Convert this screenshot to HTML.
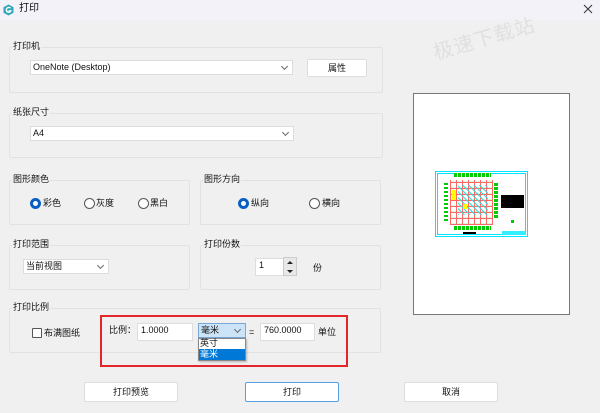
<!DOCTYPE html>
<html><head><meta charset="utf-8"><style>
*{box-sizing:border-box;margin:0;padding:0}
body{width:600px;height:413px;background:#f0f0f0;position:relative;overflow:hidden;font-family:"Liberation Sans","Noto Sans CJK SC",sans-serif;font-size:9px;color:#111}
.a{position:absolute}
.title{left:0;top:0;width:600px;height:20px;background:#f3f2f8}
.grp{position:absolute;border:1px solid #e2e2e2;border-radius:2px}
.lbl{position:absolute;background:#f0f0f0;padding:0 1px;font-size:9px;line-height:11px}
.sel{position:absolute;background:#fff;border:1px solid #dcdcdc;height:15px;line-height:13px;padding-left:2px;font-size:9px}
.sel .ch{position:absolute;right:5px;top:3px;width:5px;height:5px;border-right:1px solid #666;border-bottom:1px solid #666;transform:rotate(45deg)}
.btn{position:absolute;background:#fff;border:1px solid #ddd;border-radius:2px;height:20px;line-height:18px;text-align:center;font-size:9px}
.rad{position:absolute;width:11px;height:11px;border:1px solid #555;border-radius:50%;background:#fff}
.rad.on{border:3px solid #0a5fc4}
.t{position:absolute;font-size:9px;line-height:11px}
.inp{position:absolute;background:#fff;border:1px solid #ddd;font-size:9px;line-height:13px;padding-left:3px}
</style></head><body>
<div class="a title"></div>
<svg class="a" style="left:3px;top:4px" width="11" height="12" viewBox="0 0 11 12"><path d="M5.5 0.5L10.5 3.2V8.8L5.5 11.5L0.5 8.8V3.2Z" fill="#2fa7b9"/><path d="M7.5 4.2A2.4 2.4 0 1 0 7.8 7H5.6" stroke="#fff" stroke-width="1.4" fill="none"/></svg>
<div class="t" style="left:19px;top:3px;font-size:10px;line-height:12px">打印</div>
<svg class="a" style="left:583px;top:4px" width="10" height="10"><path d="M1 1L9 9M9 1L1 9" stroke="#333" stroke-width="1"/></svg>
<div class="a" style="left:434px;top:43px;font-size:20px;color:#e0e0e0;transform:rotate(-16deg);transform-origin:left center;letter-spacing:1px;line-height:22px">极速下载站</div>

<div class="grp" style="left:9px;top:47px;width:374px;height:46px"></div>
<div class="lbl" style="left:12px;top:41px">打印机</div>
<div class="sel" style="left:30px;top:60px;width:263px">OneNote (Desktop)<span class="ch"></span></div>
<div class="btn" style="left:307px;top:59px;width:60px;height:18px;line-height:16px">属性</div>

<div class="grp" style="left:9px;top:113px;width:374px;height:45px"></div>
<div class="lbl" style="left:12px;top:107px">纸张尺寸</div>
<div class="sel" style="left:30px;top:126px;width:264px">A4<span class="ch"></span></div>

<div class="grp" style="left:9px;top:180px;width:181px;height:45px"></div>
<div class="lbl" style="left:12px;top:174px">图形颜色</div>
<div class="rad on" style="left:30px;top:198px"></div><div class="t" style="left:43px;top:198px">彩色</div>
<div class="rad" style="left:84px;top:198px"></div><div class="t" style="left:96px;top:198px">灰度</div>
<div class="rad" style="left:138px;top:198px"></div><div class="t" style="left:150px;top:198px">黑白</div>

<div class="grp" style="left:200px;top:180px;width:181px;height:45px"></div>
<div class="lbl" style="left:203px;top:174px">图形方向</div>
<div class="rad on" style="left:238px;top:198px"></div><div class="t" style="left:251px;top:198px">纵向</div>
<div class="rad" style="left:309px;top:198px"></div><div class="t" style="left:322px;top:198px">横向</div>

<div class="grp" style="left:9px;top:245px;width:181px;height:45px"></div>
<div class="lbl" style="left:12px;top:239px">打印范围</div>
<div class="sel" style="left:23px;top:259px;width:86px">当前视图<span class="ch"></span></div>

<div class="grp" style="left:200px;top:245px;width:181px;height:45px"></div>
<div class="lbl" style="left:203px;top:239px">打印份数</div>
<div class="inp" style="left:255px;top:258px;width:29px;height:18px">1</div>
<div class="a" style="left:283px;top:257px;width:14px;height:19px;background:#e8e8e8;border:1px solid #ccc"></div>
<svg class="a" style="left:286px;top:259px" width="8" height="16"><path d="M1 5L4 2L7 5Z M1 11L4 14L7 11Z" fill="#222"/></svg>
<div class="t" style="left:313px;top:263px">份</div>

<div class="grp" style="left:9px;top:308px;width:372px;height:45px"></div>
<div class="lbl" style="left:12px;top:302px">打印比例</div>
<div class="a" style="left:32px;top:328px;width:10px;height:10px;border:1px solid #555;background:#fff;border-radius:1px"></div>
<div class="t" style="left:44px;top:328px">布满图纸</div>

<div class="a" style="left:100px;top:315px;width:248px;height:52px;border:2px solid #e3262b"></div>
<div class="t" style="left:109px;top:325px">比例：</div>
<div class="inp" style="left:137px;top:323px;width:56px;height:18px">1.0000</div>
<div class="sel" style="left:198px;top:323px;width:48px;height:15px;background:#cce4f7;border-color:#7aa7d6">毫米<span class="ch"></span></div>
<div class="a" style="left:198px;top:338px;width:48px;height:23px;background:#fff;border:1px solid #888;box-shadow:1px 1px 2px rgba(0,0,0,.25)"></div>
<div class="t" style="left:200px;top:338px">英寸</div>
<div class="a" style="left:199px;top:349px;width:46px;height:11px;background:#0078d7"></div>
<div class="t" style="left:200px;top:349px;color:#fff">毫米</div>
<div class="t" style="left:249px;top:327px">=</div>
<div class="inp" style="left:260px;top:323px;width:55px;height:18px">760.0000</div>
<div class="t" style="left:318px;top:327px">单位</div>

<div class="a" style="left:413px;top:93px;width:157px;height:222px;background:#fff;border:1px solid #777"></div>
<div class="a" style="left:435px;top:171px;width:93px;height:66px;border:1px solid #00e5ff;background:#fff"></div>
<div class="a" style="left:437px;top:173px;width:89px;height:62px;border:1px solid #00e5ff"></div>
<div class="a" style="left:450px;top:180px;width:43px;height:45px;background:repeating-linear-gradient(90deg,#f66 0 1px,transparent 1px 6px),repeating-linear-gradient(0deg,#f66 0 1px,#cfd 1px 2px,transparent 2px 6px)"></div>
<div class="a" style="left:458px;top:185px;width:30px;height:30px;background:repeating-linear-gradient(45deg,#3dd 0 1px,transparent 1px 4px)"></div>
<div class="a" style="left:452px;top:190px;width:4px;height:10px;background:#ff0"></div>
<div class="a" style="left:463px;top:204px;width:4px;height:5px;background:#ff0"></div>
<div class="a" style="left:454px;top:173px;width:37px;height:4px;background:repeating-linear-gradient(90deg,#0c0 0 3px,#fff 3px 4px)"></div>
<div class="a" style="left:454px;top:226px;width:37px;height:4px;background:repeating-linear-gradient(90deg,#0c0 0 3px,#fff 3px 4px)"></div>
<div class="a" style="left:444px;top:181px;width:4px;height:40px;background:repeating-linear-gradient(0deg,#0c0 0 2px,#fff 2px 4px)"></div>
<div class="a" style="left:494px;top:183px;width:4px;height:35px;background:repeating-linear-gradient(0deg,#0c0 0 3px,#fff 3px 4px)"></div>
<div class="a" style="left:501px;top:195px;width:23px;height:13px;background:#000"></div>
<div class="a" style="left:511px;top:220px;width:3px;height:3px;background:#0c0"></div>
<div class="a" style="left:502px;top:231px;width:24px;height:4px;background:#3ef"></div>
<div class="a" style="left:463px;top:232px;width:13px;height:2px;background:#000"></div>

<div class="btn" style="left:84px;top:382px;width:94px">打印预览</div>
<div class="btn" style="left:245px;top:382px;width:94px;border-color:#5a9fe0">打印</div>
<div class="btn" style="left:404px;top:382px;width:94px">取消</div>
</body></html>
